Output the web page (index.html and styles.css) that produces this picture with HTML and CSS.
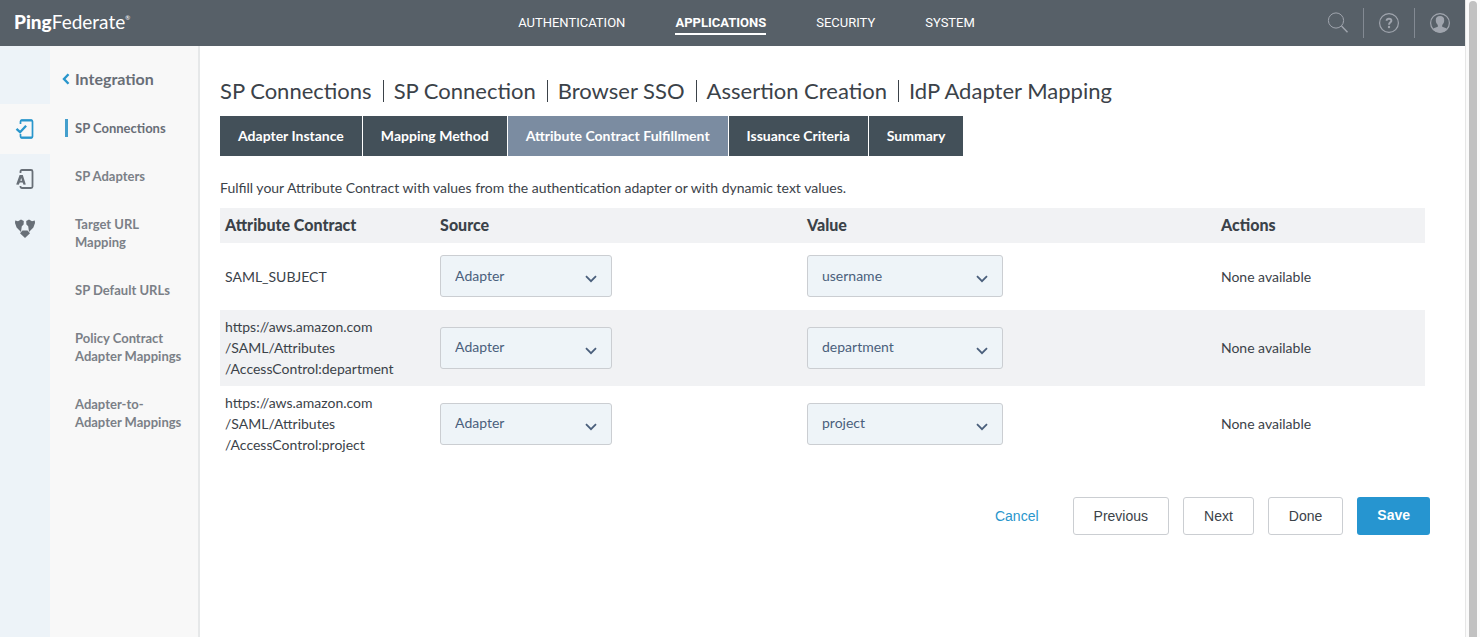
FILE: index.html
```html
<!DOCTYPE html>
<html lang="en">
<head>
<meta charset="utf-8">
<title>PingFederate - IdP Adapter Mapping</title>
<link rel="stylesheet" href="styles.css">
</head>
<body>
<div class="window">
  <div class="app">
    <header class="topbar">
      <a class="logo" href="#"><span class="logo-ping">Ping</span><span class="logo-federate">Federate</span><span class="logo-mark">®</span></a>
      <nav class="topnav" aria-label="Main">
        <a href="#">AUTHENTICATION</a>
        <a class="is-active" href="#">APPLICATIONS</a>
        <a href="#">SECURITY</a>
        <a href="#">SYSTEM</a>
      </nav>
      <div class="tools">
        <button type="button" aria-label="Search">
          <svg width="22" height="22" viewBox="0 0 22 22" fill="none" stroke="currentColor"><circle cx="9" cy="8.500" r="7.600"/><path d="M14.500 14l6 6.300" stroke-width="1.400"/></svg>
        </button>
        <button type="button" aria-label="Help">
          <svg width="22" height="22" viewBox="0 0 22 22" fill="none" stroke="currentColor"><circle cx="11" cy="11" r="9.400" stroke-width="1.200"/><path d="M8.600 8.700C8.700 7.400 9.600 6.700 11 6.700S13.400 7.500 13.400 8.700C13.400 10.200 11 10.500 11 12.700" stroke-width="1.900"/><circle cx="11" cy="15" r="1.200" fill="currentColor" stroke="none"/></svg>
        </button>
        <button type="button" aria-label="Account">
          <svg width="22" height="22" viewBox="0 0 22 22" fill="none" stroke="currentColor"><circle cx="11" cy="11" r="9.400" stroke-width="1.200"/><path d="M11 4c-3 0-4.400 1.700-4.200 4.400.1 2 .8 3.400 2 4.500v1.900c-1.800.9-3.900 1-5.100 2.500 1.800 2.100 4.300 3.300 7.300 3.300s5.500-1.200 7.300-3.300c-1.200-1.500-3.300-1.600-5.100-2.500v-1.900c1.200-1.100 1.900-2.500 2-4.500.2-2.700-1.200-4.400-4.200-4.400z" fill="currentColor" stroke="none"/></svg>
        </button>
      </div>
    </header>
    <div class="body">
      <nav class="rail" aria-label="Sections">
        <a class="is-active" href="#" aria-label="Integration">
          <svg width="20" height="22" viewBox="0 0 20 22" fill="none" stroke="currentColor" stroke-width="1.700"><path d="M5.500 6V3.500Q5.500 2 7 2h9Q17.500 2 17.500 3.500v15Q17.500 20 16 20H7Q5.500 20 5.500 18.500V16"/><path d="M6 2.600h11M6 19.400h11" stroke-width="2"/><path d="M1.500 10.800l3.600 3.400 6-6.500" stroke-width="2.300"/></svg>
        </a>
        <a href="#" aria-label="Adapters">
          <svg width="20" height="22" viewBox="0 0 20 22" fill="none" stroke="currentColor" stroke-width="1.800"><path d="M5.500 5V3.500Q5.500 2 7 2h9Q17.500 2 17.500 3.500v15Q17.500 20 16 20H7Q5.500 20 5.500 18.500V18"/><path fill="currentColor" stroke="none" fill-rule="evenodd" d="M4.600 7h3.200l3 9.500-2.200.3-1-2.200H4.800l-1.100 2.200-2.500-.3zM6.200 10l-.9 2.700h1.800z"/></svg>
        </a>
        <a href="#" aria-label="Policies">
          <svg width="22" height="22" viewBox="0 0 22 22" fill="currentColor"><path d="M1.200 2.600l2.800.7 3-1.700L9.800 3 9.600 6.500 7.800 8.200 7 14 2.600 9.500 1 5z"/><path d="M20.800 2.600l-2.800.7-3-1.700L12.200 3l.2 3.500 1.800 1.700.8 5.800 4.400-4.500L21 5z"/><path d="M8.500 12.500h5l2.500 2.800-5 4.700-5-4.700z"/></svg>
        </a>
      </nav>
      <nav class="sidebar" aria-label="Integration">
        <a class="sidebar-title" href="#"><svg width="8" height="12" viewBox="0 0 8 12" fill="none" stroke="#2996cc" stroke-width="2.400"><path d="M6.500 1.200L2 6l4.500 4.800"/></svg>Integration</a>
        <a class="is-active" href="#">SP Connections</a>
        <a href="#">SP Adapters</a>
        <a href="#">Target URL Mapping</a>
        <a href="#">SP Default URLs</a>
        <a href="#">Policy Contract Adapter Mappings</a>
        <a href="#">Adapter-to-<br>Adapter Mappings</a>
      </nav>
      <main class="content">
        <nav class="crumbs" aria-label="Breadcrumb">
          <a href="#">SP Connections</a>
          <a href="#">SP Connection</a>
          <a href="#">Browser SSO</a>
          <a href="#">Assertion Creation</a>
          <a href="#">IdP Adapter Mapping</a>
        </nav>
        <div class="tabs">
          <button type="button">Adapter Instance</button>
          <button type="button">Mapping Method</button>
          <button type="button" class="is-active">Attribute Contract Fulfillment</button>
          <button type="button">Issuance Criteria</button>
          <button type="button">Summary</button>
        </div>
        <p class="intro">Fulfill your Attribute Contract with values from the authentication adapter or with dynamic text values.</p>
        <table class="mapping">
          <colgroup><col class="col-contract"><col class="col-source"><col class="col-value"><col class="col-actions"></colgroup>
          <thead>
            <tr><th scope="col">Attribute Contract</th><th scope="col">Source</th><th scope="col">Value</th><th scope="col">Actions</th></tr>
          </thead>
          <tbody>
            <tr>
              <td>SAML_SUBJECT</td>
              <td><div class="pick pick-source"><select aria-label="Source for SAML_SUBJECT"><option>Adapter</option></select><svg width="12" height="8" viewBox="0 0 12 8" fill="none" stroke="currentColor" stroke-width="1.800"><path d="M1 1.200l5 5 5-5"/></svg></div></td>
              <td><div class="pick pick-value"><select aria-label="Value for SAML_SUBJECT"><option>username</option></select><svg width="12" height="8" viewBox="0 0 12 8" fill="none" stroke="currentColor" stroke-width="1.800"><path d="M1 1.200l5 5 5-5"/></svg></div></td>
              <td>None available</td>
            </tr>
            <tr>
              <td>https://aws.amazon.com<br>/SAML/Attributes<br>/AccessControl:department</td>
              <td><div class="pick pick-source"><select aria-label="Source for department"><option>Adapter</option></select><svg width="12" height="8" viewBox="0 0 12 8" fill="none" stroke="currentColor" stroke-width="1.800"><path d="M1 1.200l5 5 5-5"/></svg></div></td>
              <td><div class="pick pick-value"><select aria-label="Value for department"><option>department</option></select><svg width="12" height="8" viewBox="0 0 12 8" fill="none" stroke="currentColor" stroke-width="1.800"><path d="M1 1.200l5 5 5-5"/></svg></div></td>
              <td>None available</td>
            </tr>
            <tr>
              <td>https://aws.amazon.com<br>/SAML/Attributes<br>/AccessControl:project</td>
              <td><div class="pick pick-source"><select aria-label="Source for project"><option>Adapter</option></select><svg width="12" height="8" viewBox="0 0 12 8" fill="none" stroke="currentColor" stroke-width="1.800"><path d="M1 1.200l5 5 5-5"/></svg></div></td>
              <td><div class="pick pick-value"><select aria-label="Value for project"><option>project</option></select><svg width="12" height="8" viewBox="0 0 12 8" fill="none" stroke="currentColor" stroke-width="1.800"><path d="M1 1.200l5 5 5-5"/></svg></div></td>
              <td>None available</td>
            </tr>
          </tbody>
        </table>
        <div class="actions">
          <a class="cancel" href="#">Cancel</a>
          <button type="button">Previous</button>
          <button type="button">Next</button>
          <button type="button">Done</button>
          <button type="button" class="primary">Save</button>
        </div>
      </main>
    </div>
  </div>
  <div class="scrollbar"><div class="thumb"></div></div>
</div>
</body>
</html>
```
FILE: styles.css
```css
* { box-sizing: border-box; }

body {
  margin: 0;
  font-family: Lato, "Open Sans", sans-serif;
  font-size: 14px;
  color: #3b4249;
  background: #fff;
}

a { color: inherit; text-decoration: none; }
button, select { font: inherit; color: inherit; }
svg { display: block; }

.window { display: flex; min-height: 100vh; }
.app { flex: 1; min-width: 0; display: flex; flex-direction: column; }

.topbar {
  display: grid;
  grid-template-columns: 1fr auto 1fr;
  align-items: center;
  height: 46px;
  padding: 0 14px;
  background: #576068;
  color: #fff;
}
.logo { display: flex; padding-bottom: 2px; font-size: 19px; line-height: 28px; }
.logo-ping { font-weight: 900; }
.logo-mark { font-size: 6px; line-height: 20px; }

.topnav { display: flex; gap: 50px; margin-left: 28px; font-family: Roboto, sans-serif; font-size: 13px; line-height: 20px; }
.topnav a { padding: 2px 0 0; border-bottom: 2px solid transparent; }
.topnav .is-active { font-weight: 700; border-bottom-color: #fff; }

.tools { display: flex; justify-content: flex-end; }
.tools button {
  padding: 4px 14px;
  border: 0;
  border-left: 1px solid #838a93;
  background: none;
  color: #a0a5ae;
}
.tools button:first-child { border-left: 0; }
.tools button:last-child { padding-right: 0; }

.body { flex: 1; display: flex; }

.rail { flex: none; width: 50px; padding-top: 58px; background: #edf3f8; color: #686f77; }
.rail a { display: flex; align-items: center; justify-content: center; height: 50px; }
.rail .is-active { background: #f8f8f8; color: #2996cc; }

.sidebar {
  flex: none;
  display: flex;
  flex-direction: column;
  gap: 30px;
  width: 150px;
  padding: 23px 10px 24px 15px;
  border-right: 2px solid #e6e8e9;
  background: #f8f8f8;
  color: #7b8087;
  font-size: 13px;
  font-weight: 700;
  line-height: 18px;
}
.sidebar a { padding-left: 10px; }
.sidebar .is-active { padding-left: 7px; border-left: 3px solid #449fcd; color: #686e77; }
.sidebar .sidebar-title {
  display: flex;
  align-items: center;
  gap: 5px;
  padding-left: 0;
  margin-left: -3px;
  font-size: 16px;
  line-height: 20px;
  color: #686e77;
}

.content { flex: 1; min-width: 0; padding: 34px 35px 34px 20px; }

.crumbs { display: flex; font-size: 22px; line-height: 22px; }
.crumbs a + a { margin-left: 11px; padding-left: 10px; border-left: 1px solid #3b4249; }

.tabs { display: flex; gap: 1px; margin-top: 14px; }
.tabs button {
  height: 40px;
  padding: 0 18px 2px;
  border: 0;
  background: #435059;
  color: #fff;
  font-weight: 700;
}
.tabs .is-active { background: #7b8ca1; }

.intro { margin: 21px 0 10px; line-height: 21px; }

.mapping { width: calc(100% - 5px); table-layout: fixed; border-collapse: collapse; }
.col-contract { width: 17.85%; }
.col-source { width: 30.45%; }
.col-value { width: 34.35%; }
.mapping th { height: 35px; padding: 0 5px 2px; text-align: left; font-size: 16px; font-weight: 900; }
.mapping td { height: 67px; padding: 6px 5px 7px; line-height: 21px; }
.mapping thead tr, .mapping tbody tr:nth-child(even) { background: #f1f2f4; }

.pick { position: relative; color: #4a5f7c; }
.pick-source { width: 172px; }
.pick-value { width: 196px; }
.pick select {
  display: block;
  appearance: none;
  width: 100%;
  height: 42px;
  padding: 0 36px 2px 14px;
  border: 1px solid #cbced2;
  border-radius: 3px;
  background: #eef4f8;
}
.pick svg { position: absolute; right: 15px; top: 20px; pointer-events: none; }

.actions {
  display: flex;
  justify-content: flex-end;
  align-items: center;
  gap: 14px;
  margin-top: 35px;
  font-family: "Liberation Sans", Arial, sans-serif;
}
.actions button {
  height: 38px;
  padding: 0 20px;
  border: 1px solid #cbced2;
  border-radius: 3px;
  background: #fff;
}
.actions .primary { padding-bottom: 2px; border: 0; background: #2695d0; color: #fff; font-weight: 700; }
.cancel { margin-right: 20px; color: #2996cc; }

.scrollbar { flex: none; width: 15px; padding: 1px 2px 0 3px; border-left: 1px solid #e6e6e6; background: #fafafa; }
.thumb { width: 8px; height: 100%; border-radius: 4px 4px 0 0; background: #c1c1c1; }
```
